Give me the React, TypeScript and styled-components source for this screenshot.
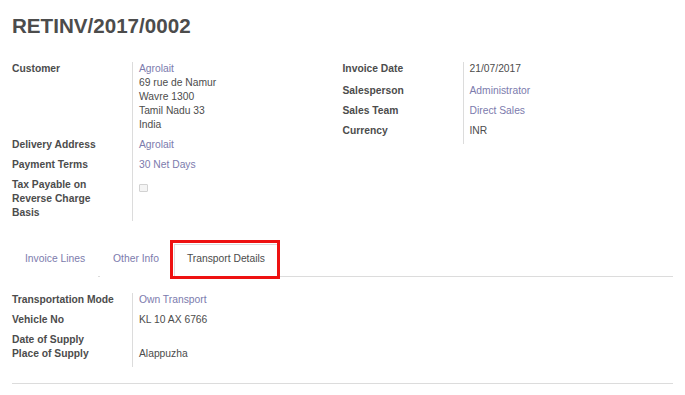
import React from 'react';
import styled, { createGlobalStyle } from 'styled-components';

const GlobalStyle = createGlobalStyle`
  * { box-sizing: border-box; }
  body {
    margin: 0;
    background: #fff;
    color: #4c4c4c;
    font-family: "Liberation Sans", Arial, Helvetica, sans-serif;
    font-size: 10.3px;
  }
`;

const Sheet = styled.div`
  padding: 14px 12px 0;
`;

const Title = styled.h1`
  margin: 0;
  font-size: 20.6px;
  line-height: 23px;
  font-weight: bold;
  color: #4c4c4c;
`;

const GroupRow = styled.div<{ $top?: number }>`
  display: grid;
  grid-template-columns: 1fr 1fr;
  margin-top: ${p => p.$top ?? 25}px;
  align-items: start;
`;

const Group = styled.div`
  display: grid;
  grid-template-columns: 121px 1fr;
  line-height: 14px;
`;

const Label = styled.div<{ $pb: number }>`
  font-weight: bold;
  border-right: 1px solid #dcdcdc;
  padding: 0 15px ${p => p.$pb}px 0;
`;

const Value = styled.div<{ $pb: number }>`
  padding: 0 0 ${p => p.$pb}px 6px;
`;

const Link = styled.a`
  color: #7c7bad;
  text-decoration: none;
  display: block;
`;

const Checkbox = styled.span`
  display: block;
  width: 9px;
  height: 8px;
  margin-top: 6px;
  border: 1px solid #d2d2d2;
  border-radius: 1px;
  background: #f4f4f4;
`;

const TabBar = styled.ul`
  display: flex;
  list-style: none;
  margin: 23px 0 0;
  padding: 0;
  border-bottom: 1px solid #dcdcdc;
`;

const Tab = styled.li<{ $active?: boolean }>`
  position: relative;
  margin: 0 2px -1px 0;
  padding: 7px 12px 10px;
  line-height: 14px;
  border: 1px solid ${p => (p.$active ? '#dcdcdc' : 'transparent')};
  border-bottom-color: ${p => (p.$active ? '#fff' : 'transparent')};
  background: #fff;
  color: ${p => (p.$active ? '#4c4c4c' : '#7c7bad')};

  ${p =>
    p.$active &&
    `
    &::after {
      content: '';
      position: absolute;
      top: -5px;
      left: -5px;
      right: -3px;
      bottom: -3px;
      border: 3px solid #ee1111;
    }
  `}
`;

const TabContent = styled.div`
  padding-top: 16px;
`;

const Divider = styled.div`
  margin-top: 16px;
  border-top: 1px solid #dcdcdc;
`;

type FieldProps = { label: React.ReactNode; pb?: number; children?: React.ReactNode };

const Field = ({ label, pb = 6, children }: FieldProps) => (
  <>
    <Label $pb={pb}>{label}</Label>
    <Value $pb={pb}>{children}</Value>
  </>
);

export default function App() {
  return (
    <Sheet>
      <GlobalStyle />
      <Title>RETINV/2017/0002</Title>

      <GroupRow>
        <Group>
          <Field label="Customer">
            <Link>Agrolait</Link>
            69 rue de Namur
            <br />
            Wavre 1300
            <br />
            Tamil Nadu 33
            <br />
            India
          </Field>
          <Field label="Delivery Address">
            <Link>Agrolait</Link>
          </Field>
          <Field label="Payment Terms">
            <Link>30 Net Days</Link>
          </Field>
          <Field label="Tax Payable on Reverse Charge Basis" pb={1}>
            <Checkbox />
          </Field>
        </Group>

        <Group>
          <Field label="Invoice Date" pb={8}>
            21/07/2017
          </Field>
          <Field label="Salesperson">
            <Link>Administrator</Link>
          </Field>
          <Field label="Sales Team">
            <Link>Direct Sales</Link>
          </Field>
          <Field label="Currency">INR</Field>
        </Group>
      </GroupRow>

      <TabBar>
        <Tab>Invoice Lines</Tab>
        <Tab>Other Info</Tab>
        <Tab $active>Transport Details</Tab>
      </TabBar>

      <TabContent>
        <GroupRow $top={0}>
          <Group>
            <Field label="Transportation Mode">
              <Link>Own Transport</Link>
            </Field>
            <Field label="Vehicle No">KL 10 AX 6766</Field>
            <Field label="Date of Supply" pb={0} />
            <Field label="Place of Supply">Alappuzha</Field>
          </Group>
        </GroupRow>
        <Divider />
      </TabContent>
    </Sheet>
  );
}
